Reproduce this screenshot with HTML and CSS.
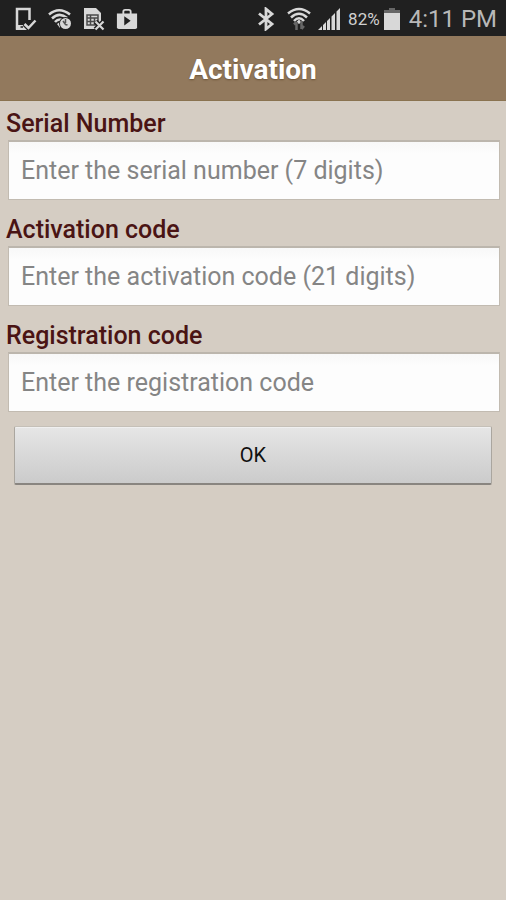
FILE: index.html
```html
<!DOCTYPE html>
<html lang="en">
<head>
<meta charset="utf-8">
<meta name="viewport" content="width=device-width, initial-scale=1">
<title>Activation</title>
<link rel="stylesheet" href="styles.css">
</head>
<body>
<div class="status">
  <div class="status-group notices">
    <svg width="22" height="24" viewBox="0 0 22 24" aria-hidden="true">
      <path d="M14.500 13V2H2V21.500H10" fill="none" stroke="#d8d8d8" stroke-width="2.500"/>
      <path d="M1 18H11L14 23H1Z" fill="#d8d8d8"/>
      <path d="M5.500 20H8" stroke="#202020" stroke-width="1.500"/>
      <path d="M9.500 17L13.500 21L20.500 13.500" fill="none" stroke="#202020" stroke-width="5"/>
      <path d="M9.500 17L13.500 21L20.500 13.500" fill="none" stroke="#d8d8d8" stroke-width="2.500"/>
    </svg>
    <svg width="24" height="24" viewBox="0 0 24 24" aria-hidden="true">
      <g fill="none" stroke="#d8d8d8" stroke-width="2.600">
        <path d="M1 7.500Q11 -1 22 7.500"/>
        <path d="M4 11.500Q11.500 4.500 19 11"/>
        <path d="M7 15Q10 11.500 15 13"/>
      </g>
      <path d="M9 17L12 15V21Z" fill="#d8d8d8"/>
      <circle cx="17.500" cy="16.500" r="6.500" fill="#202020"/>
      <circle cx="17.500" cy="16.500" r="5.500" fill="#d8d8d8"/>
      <path d="M15 14L17.500 17.500L19.500 18M17.500 12V16" fill="none" stroke="#555" stroke-width="1.500"/>
    </svg>
    <svg width="22" height="24" viewBox="0 0 22 24" aria-hidden="true">
      <path d="M1 1H13L18 6V22H1Z" fill="#d8d8d8"/>
      <path d="M4 8H15V18H4ZM4 11H15M4 14.500H15M7.500 8V18M11.500 11V18" fill="none" stroke="#4a4a4a" stroke-width="1.500"/>
      <path d="M12.500 14.500L20.500 22.500M20.500 14.500L12.500 22.500" stroke="#202020" stroke-width="5"/>
      <path d="M12.500 14.500L20.500 22.500M20.500 14.500L12.500 22.500" stroke="#d8d8d8" stroke-width="2.200"/>
    </svg>
    <svg width="22" height="24" viewBox="0 0 24 24" aria-hidden="true">
      <path d="M8 7V4Q8 2 10 2H14Q16 2 16 4V7" fill="none" stroke="#d8d8d8" stroke-width="2"/>
      <path d="M1 6H23V21Q23 23 21 23H3Q1 23 1 21Z" fill="#d8d8d8"/>
      <path d="M9 9L16 14L9 19Z" fill="#202020"/>
    </svg>
  </div>
  <div class="status-group system">
    <svg width="18" height="24" viewBox="0 0 18 24" aria-hidden="true">
      <path d="M2 6.500L15 17L9 22V2L15 7L2 17.500" fill="none" stroke="#d8d8d8" stroke-width="2.800"/>
    </svg>
    <svg class="wifi" width="24" height="24" viewBox="0 0 24 24" aria-hidden="true">
      <g fill="none" stroke="#d8d8d8" stroke-width="2.500">
        <path d="M1 6.500Q12 -2.500 23 6.500"/>
        <path d="M4 10.500Q12 3 20 10.500"/>
        <path d="M7 14Q12 8.500 17 14"/>
      </g>
      <path d="M9.500 15L12 12.500L14.500 15L12 17Z" fill="#d8d8d8"/>
      <path d="M9.500 23V15M7 17.500L9.500 15M14.500 14V22M14.500 22L17 19" fill="none" stroke="#666" stroke-width="2.500"/>
    </svg>
    <svg width="24" height="24" viewBox="0 0 24 24" aria-hidden="true">
      <path d="M1 23L5 19V23ZM6 23V18L9 15V23ZM10 23V14L13 11V23ZM14.500 23V9.500L18 6V23ZM19.500 23V4.500L23 1V23Z" fill="#d8d8d8"/>
    </svg>
    <span class="percent">82%</span>
    <svg class="battery" width="16" height="24" viewBox="0 0 16 24" aria-hidden="true">
      <path d="M0 3H5V1H11V3H16V7H0Z" fill="#666"/>
      <path d="M0 6H16V23H0Z" fill="#d8d8d8"/>
    </svg>
    <span class="time">4:11 PM</span>
  </div>
</div>
<header class="titlebar"><h1>Activation</h1></header>
<form class="form">
  <div class="field">
    <label for="serial">Serial Number</label>
    <input id="serial" type="text" placeholder="Enter the serial number (7 digits)">
  </div>
  <div class="field">
    <label for="activation">Activation code</label>
    <input id="activation" type="text" placeholder="Enter the activation code (21 digits)">
  </div>
  <div class="field">
    <label for="registration">Registration code</label>
    <input id="registration" type="text" placeholder="Enter the registration code">
  </div>
  <button class="ok" type="button">OK</button>
</form>
</body>
</html>
```
FILE: styles.css
```css
* {
  box-sizing: border-box;
}

body {
  margin: 0;
  min-height: 100vh;
  background: #d5cdc3;
  font-family: Roboto, "Liberation Sans", sans-serif;
}

.status {
  display: flex;
  justify-content: space-between;
  align-items: center;
  height: 36px;
  padding: 2px 9px 0 15px;
  background: #202020;
  color: #d0d0d0;
}

.status svg {
  flex: none;
}

.status-group {
  display: flex;
  align-items: center;
}

.notices {
  gap: 11px;
}

.percent {
  margin-left: 7px;
  font-size: 17px;
}

.wifi {
  margin: 0 6px 0 12px;
}

.battery {
  margin: 0 9px 0 4px;
}

.time {
  font-size: 24px;
  line-height: 32px;
  color: #b8b8b8;
}

.titlebar {
  padding: 18px 8px 14px;
  background: #92795d;
  border-bottom: 1px solid #8a7350;
  text-align: center;
}

.titlebar h1 {
  margin: 0;
  font-size: 28px;
  line-height: 32px;
  font-weight: 700;
  color: #fff;
  text-shadow: 0 1px 2px #6d5335;
}

.form {
  display: flex;
  flex-direction: column;
  gap: 14px;
  padding: 7px 6px;
}

.field {
  display: flex;
  flex-direction: column;
}

.field label {
  font-size: 25px;
  line-height: 32px;
  font-weight: 500;
  color: #4a1414;
}

.field input {
  height: 60px;
  margin: 0 0 0 2px;
  padding: 0 12px;
  border: 1px solid #c2bbb1;
  border-top: 2px solid #bcb6ad;
  border-radius: 0;
  background: linear-gradient(#f8f8f8, #fdfdfd 12px);
  font: 400 25px Roboto, "Liberation Sans", sans-serif;
  color: #222;
}

.field input::placeholder {
  color: #858585;
  opacity: 1;
}

.ok {
  height: 59px;
  margin: 0 8px;
  border: 1px solid #aaa69f;
  border-top-color: #c5c0b8;
  border-bottom: 2px solid #898580;
  border-radius: 2px;
  background: linear-gradient(#e6e6e6, #cbcbcb);
  box-shadow: inset 0 1px #f0f0f0;
  font: 400 20px Roboto, "Liberation Sans", sans-serif;
  color: #111;
}
```
